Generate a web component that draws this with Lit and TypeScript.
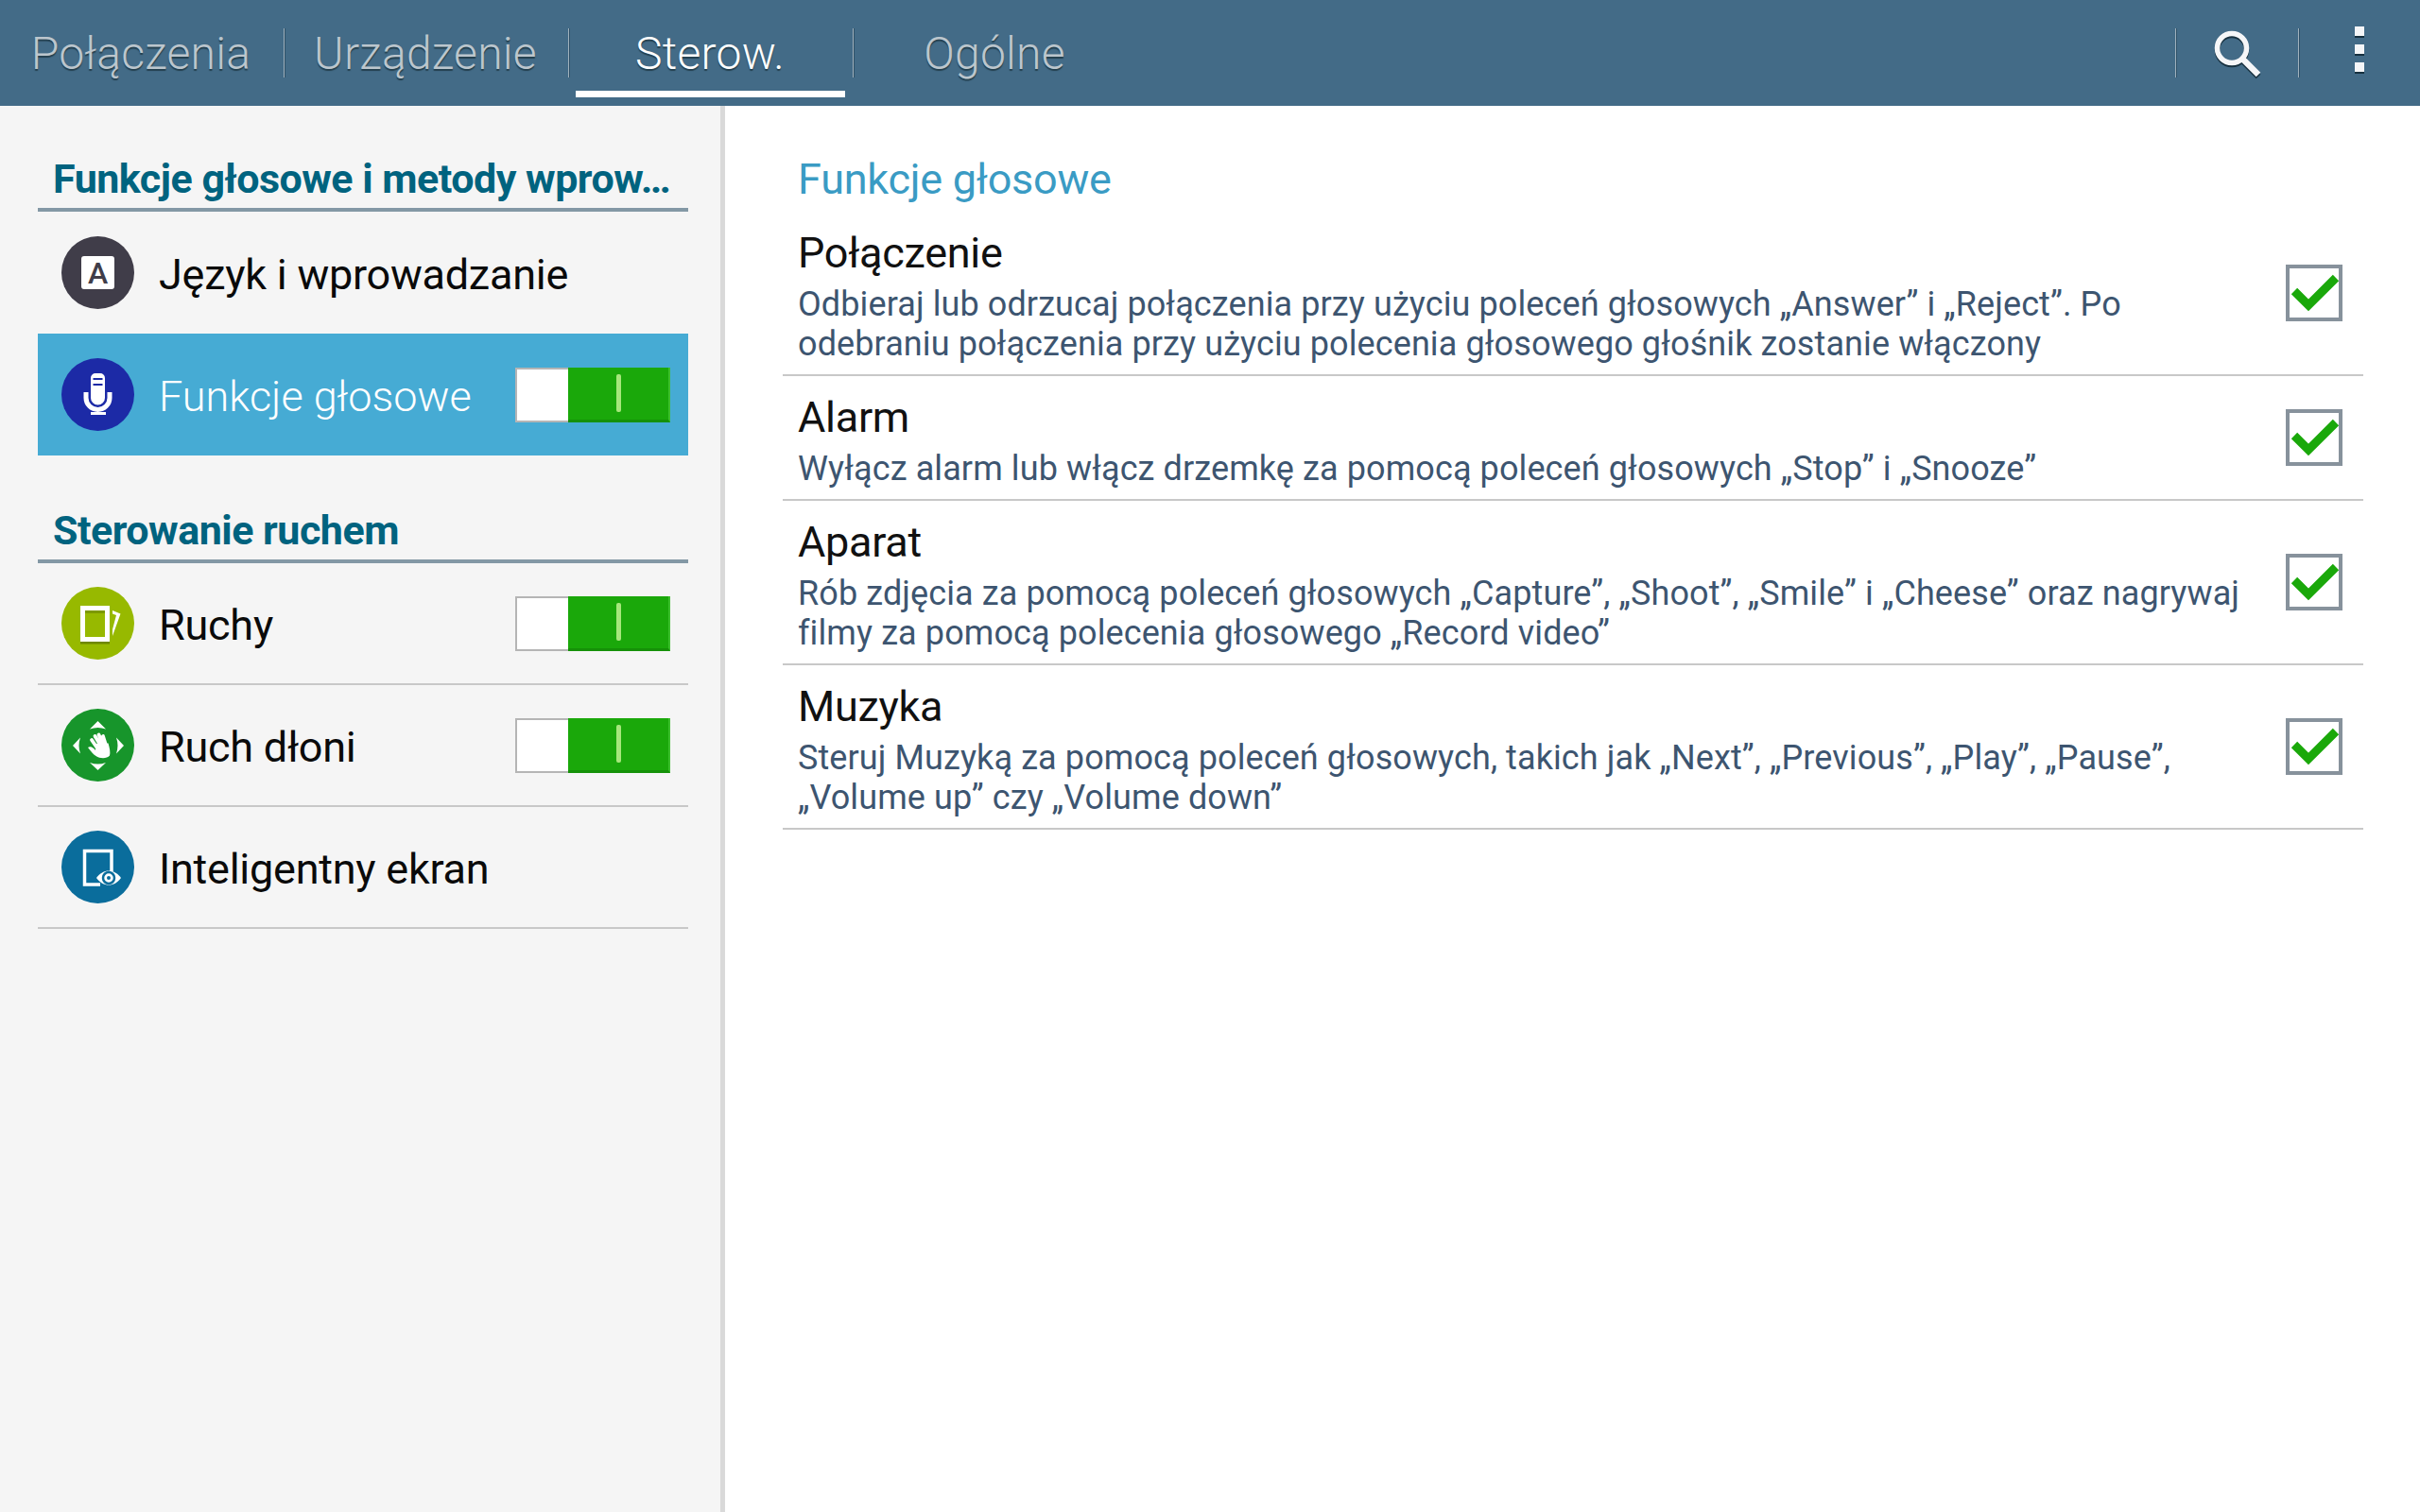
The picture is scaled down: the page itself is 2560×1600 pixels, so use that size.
import { LitElement, html, css, svg } from "lit";
import { customElement } from "lit/decorators.js";

const icons: Record<string, unknown> = {
  lang: svg`<circle cx="38.5" cy="38.5" r="38.5" fill="#403d49"/><rect x="21" y="21" width="35" height="35" rx="3" fill="#fff"/><text x="38.5" y="50" text-anchor="middle" font-family="Roboto, sans-serif" font-size="32" font-weight="500" fill="#403d49">A</text>`,
  mic: svg`<circle cx="38.5" cy="38.5" r="38.5" fill="#1c2aa6"/><path d="M31 42V21a5 5 0 0 1 5-5h5a5 5 0 0 1 5 5v21a7.500 7.500 0 0 1-15 0z" fill="#fff"/><path d="M33.500 22h10M33.500 28h10" stroke="#1c2aa6" stroke-width="2" fill="none"/><path d="M26 36v6a12.500 12.500 0 0 0 25 0v-6" stroke="#fff" stroke-width="5" fill="none"/><rect x="31" y="57" width="16" height="3" fill="#fff"/>`,
  motion: svg`<circle cx="38.5" cy="38.5" r="38.5" fill="#97b900"/><rect x="20" y="20" width="31" height="38" fill="#fff"/><rect x="25" y="25" width="21" height="28" fill="#97b900"/><rect x="25" y="25" width="21" height="3" fill="#7d9900"/><rect x="20" y="58" width="31" height="2.500" fill="#6f8800"/><path d="M54 25l8.500 3.500L54 52v-7l4-15-4-1.500z" fill="#fff"/>`,
  hand: svg`<circle cx="38.5" cy="38.5" r="38.5" fill="#17952b"/><path d="M38.500 13l8.500 8.500q-8.500-3-17 0zM38.500 65l8.500-8q-8.500 3-17 0zM12 39l8-8.500q-3 8.500 0 17zM66 39l-8-8.500q3 8.500 0 17z" fill="#fff"/><path d="M32 33l5.500 8M35.500 29l6 10M39.500 27.500l5 11M44 29l3 9.500" stroke="#fff" stroke-width="3.800" stroke-linecap="round"/><path d="M28 41c3-2 6 .5 8 3l.5-7 13-.5c1.500 5 2.500 10 1.500 13-3 3.500-10 3.500-14.500.5-3-2-5-4.500-8.500-9z" fill="#fff"/>`,
  eye: svg`<circle cx="38.5" cy="38.5" r="38.5" fill="#0a6d9c"/><path d="M53 43V21.500H24.500V57H41" fill="none" stroke="#fff" stroke-width="3.500"/><path d="M37 50c7-10 19-10 26 0-7 10-19 10-26 0z" fill="#fff"/><circle cx="50" cy="50" r="6" fill="none" stroke="#0a6d9c" stroke-width="2.500"/><circle cx="50" cy="50" r="2" fill="#0a6d9c"/>`,
};

const check = svg`<svg class="check" viewBox="0 0 60 60" aria-hidden="true"><rect x="2" y="2" width="56" height="56" fill="#fff" stroke="#87929c" stroke-width="4"/><path d="M9 28l15 15 29-29" fill="none" stroke="#1aa80a" stroke-width="9"/></svg>`;

@customElement("app-root")
export class AppRoot extends LitElement {
  static styles = css`
    :host { display: block; width: 2560px; height: 1600px; font-family: Roboto, "Noto Sans", sans-serif; overflow: hidden; background: #fff; }
    .bar { height: 112px; background: #436b87; display: flex; }
    .tab { width: 300px; height: 112px; position: relative; display: flex; align-items: center; justify-content: center; box-sizing: border-box; padding-right: 2px; font-size: 48px; font-weight: 300; color: #bcc6cd; text-shadow: 0 2px 1px #24404f; letter-spacing: 0.25px; }
    .tab.active { color: #fff; }
    .tab.active::after { content: ""; position: absolute; left: 7px; right: 8px; top: 96px; height: 7px; background: #fff; }
    .sep { width: 1px; height: 52px; margin-top: 30px; background: #9fb1bd; box-shadow: 1px 0 0 #2e5067; flex: none; }
    .grow { flex: 1; }
    .action { width: 129px; height: 112px; display: flex; align-items: center; justify-content: center; }
    .action.last { width: 128px; }
    .search { width: 64px; height: 64px; margin-left: -3px; filter: drop-shadow(0 2px 0 #16303f); }
    .dots { width: 10px; display: flex; flex-direction: column; gap: 9px; margin-top: -8px; }
    .dots i { display: block; height: 10px; background: #f5f6f8; box-shadow: 0 2px 0 #16303f; }
    .body { display: flex; height: 1488px; }
    aside { box-sizing: border-box; padding: 0 34px 0 40px; background: #f5f5f5; border-right: 5px solid #d9d9d9; width: 767px; flex: none; }
    .shead { height: 112px; box-sizing: border-box; border-bottom: 4px solid #8398a5; padding: 0 0 3px 16px; display: flex; align-items: flex-end; font-size: 43px; font-weight: 700; line-height: 56px; color: #00637f; letter-spacing: -0.5px; white-space: nowrap; }
    .shead.second { height: 114px; }
    .item { height: 129px; box-sizing: border-box; display: flex; align-items: center; padding: 0 19px 0 25px; border-bottom: 2px solid #c8c8c8; font-size: 45px; color: #0a0a0a; }
    .item.plain { border-bottom: 0; }
    .item.sel { background: #46abd4; color: #fff; border-bottom: 0; font-weight: 300; }
    .ico { width: 77px; height: 77px; flex: none; margin-right: 26px; }
    .label { flex: 1; white-space: nowrap; letter-spacing: -0.25px; padding-top: 4px; }
    .sel .label { letter-spacing: 0; }
    .toggle { width: 164px; height: 58px; display: flex; flex: none; }
    .off { width: 56px; box-sizing: border-box; background: #fff; border: 2px solid #b5b5b5; border-right: 0; }
    .on { flex: 1; box-sizing: border-box; background: #1aa80a; border-bottom: 3px solid #159108; border-right: 2px solid #3bbf2c; display: flex; align-items: center; justify-content: center; }
    .on i { display: block; width: 5px; height: 40px; border-radius: 2px; background: #a6e77c; }
    main { flex: 1; padding: 0 60px 0 61px; }
    .mhead { height: 111px; box-sizing: border-box; padding: 0 0 5px 16px; display: flex; align-items: flex-end; font-size: 45px; line-height: 56px; color: #3a9bc4; letter-spacing: -0.25px; }
    .row { display: flex; align-items: center; box-sizing: border-box; padding: 20px 0 11px 16px; margin-bottom: -1px; border-bottom: 2px solid #c8c8c8; }
    .txt { flex: 1; white-space: nowrap; }
    .title { font-size: 45px; line-height: 50px; margin-bottom: 8px; color: #111; letter-spacing: -0.3px; }
    .desc { font-size: 36px; line-height: 42px; color: #3d5570; letter-spacing: 0.1px; }
    .check { width: 60px; height: 60px; flex: none; margin: -20px 22px -11px 0; }
  `;

  private toggle() {
    return html`<div class="toggle"><div class="off"></div><div class="on"><i></i></div></div>`;
  }

  private item(icon: string, label: string, on: boolean, cls = "") {
    return html`<div class="item ${cls}">
      <svg class="ico" viewBox="0 0 77 77" aria-hidden="true">${icons[icon]}</svg>
      <span class="label">${label}</span>
      ${on ? this.toggle() : ""}
    </div>`;
  }

  private row(title: string, lines: string[]) {
    return html`<div class="row">
      <div class="txt">
        <div class="title">${title}</div>
        ${lines.map((l) => html`<div class="desc">${l}</div>`)}
      </div>
      ${check}
    </div>`;
  }

  render() {
    return html`
      <div class="bar">
        <div class="tab">Połączenia</div><div class="sep"></div>
        <div class="tab">Urządzenie</div><div class="sep"></div>
        <div class="tab active">Sterow.</div><div class="sep"></div>
        <div class="tab">Ogólne</div>
        <div class="grow"></div>
        <div class="sep"></div>
        <div class="action">
          <svg class="search" viewBox="0 0 64 64" aria-hidden="true"><circle cx="28" cy="27" r="15.500" fill="none" stroke="#f5f6f8" stroke-width="5.500"/><path d="M39 38l17 17" stroke="#f5f6f8" stroke-width="6.500" fill="none"/></svg>
        </div>
        <div class="sep"></div>
        <div class="action last"><div class="dots"><i></i><i></i><i></i></div></div>
      </div>
      <div class="body">
        <aside>
          <div class="shead">Funkcje głosowe i metody wprow…</div>
          ${this.item("lang", "Język i wprowadzanie", false, "plain")}
          ${this.item("mic", "Funkcje głosowe", true, "sel")}
          <div class="shead second">Sterowanie ruchem</div>
          ${this.item("motion", "Ruchy", true)}
          ${this.item("hand", "Ruch dłoni", true)}
          ${this.item("eye", "Inteligentny ekran", false)}
        </aside>
        <main>
          <div class="mhead">Funkcje głosowe</div>
          ${this.row("Połączenie", ["Odbieraj lub odrzucaj połączenia przy użyciu poleceń głosowych „Answer” i „Reject”. Po", "odebraniu połączenia przy użyciu polecenia głosowego głośnik zostanie włączony"])}
          ${this.row("Alarm", ["Wyłącz alarm lub włącz drzemkę za pomocą poleceń głosowych „Stop” i „Snooze”"])}
          ${this.row("Aparat", ["Rób zdjęcia za pomocą poleceń głosowych „Capture”, „Shoot”, „Smile” i „Cheese” oraz nagrywaj", "filmy za pomocą polecenia głosowego „Record video”"])}
          ${this.row("Muzyka", ["Steruj Muzyką za pomocą poleceń głosowych, takich jak „Next”, „Previous”, „Play”, „Pause”,", "„Volume up” czy „Volume down”"])}
        </main>
      </div>
    `;
  }
}
